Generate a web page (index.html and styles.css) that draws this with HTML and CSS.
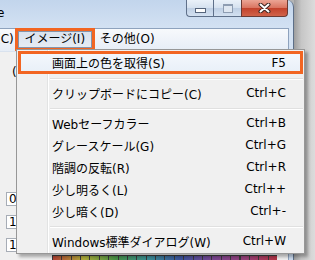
FILE: index.html
```html
<!DOCTYPE html>
<html lang="ja">
<head>
  <meta charset="UTF-8" />
  <title>イメージ メニュー</title>
  <link rel="stylesheet" href="styles.css">
</head>
<body>
  <div class="screen">
    <div class="window">
      <div class="titlebar">
        <span class="title">e</span>
        <div class="controls">
          <span class="btn min"><span class="min-glyph"></span></span>
          <span class="btn max"><span class="max-glyph"></span></span>
          <span class="btn close">
            <svg width="13" height="10" viewBox="0 0 13 10">
              <path d="M2.5 1.5 L10.5 8.5 M10.5 1.5 L2.5 8.5" stroke="#3b2420" stroke-width="4" stroke-linecap="round" fill="none"/>
              <path d="M2.5 1.5 L10.5 8.5 M10.5 1.5 L2.5 8.5" stroke="#ffffff" stroke-width="2" stroke-linecap="round" fill="none"/>
            </svg>
          </span>
        </div>
      </div>

      <div class="client">
        <!-- メニューバー -->
        <div class="menubar">
          <span class="mb-item cut">(C)</span>
          <span class="mb-item open">イメージ(I)</span>
          <span class="mb-item">その他(O)</span>
        </div>

        <!-- ウィンドウの中身（メニューの下に隠れている部分） -->
        <div class="content">
          <span class="paren">(</span>
          <div class="fields">
            <span class="field">0</span>
            <span class="field">1</span>
            <span class="field">1</span>
          </div>
          <div class="swatches"></div>
        </div>
      </div>
    </div>
    <div class="desktop"></div>

    <!-- ドロップダウンメニュー -->
    <div class="dropdown">
      <div class="mi hot"><span>画面上の色を取得(S)</span><span>F5</span></div>
      <div class="sep"></div>
      <div class="mi"><span>クリップボードにコピー(C)</span><span>Ctrl+C</span></div>
      <div class="sep"></div>
      <div class="mi"><span>Webセーフカラー</span><span>Ctrl+B</span></div>
      <div class="mi"><span>グレースケール(G)</span><span>Ctrl+G</span></div>
      <div class="mi"><span>階調の反転(R)</span><span>Ctrl+R</span></div>
      <div class="mi"><span>少し明るく(L)</span><span>Ctrl++</span></div>
      <div class="mi"><span>少し暗く(D)</span><span>Ctrl+-</span></div>
      <div class="sep"></div>
      <div class="mi"><span>Windows標準ダイアログ(W)</span><span>Ctrl+W</span></div>
    </div>
  </div>
</body>
</html>
```

FILE: styles.css
```css
body {
  margin: 0;
  font-family: "DejaVu Sans", "Noto Sans CJK JP", sans-serif;
  font-size: 12px;
  color: #000;
}
.screen {
  position: relative;
  display: flex;
  width: 315px;
  height: 260px;
  overflow: hidden;
  background: #b4b4b4;
}
.window {
  width: 294px;
  box-sizing: border-box;
  display: flex;
  flex-direction: column;
  border-right: 1px solid #5d6f88;
  border-top-right-radius: 7px;
  background: linear-gradient(#c2d5ec, #d4e2f3 30px, #cbdbef);
}
.desktop {
  flex: 1;
  background: linear-gradient(to right, #9e9e9e, #c6c6c6 35%, #dcdcdc);
}

/* タイトルバー */
.titlebar {
  height: 28px;
  flex-shrink: 0;
  display: flex;
  justify-content: space-between;
  align-items: flex-start;
}
.title {
  margin: 6px 0 0 -3px;
  line-height: 14px;
}
.controls {
  display: flex;
  margin-right: 5px;
}
.btn {
  height: 17px;
  box-sizing: border-box;
  display: flex;
  align-items: center;
  justify-content: center;
  border: 1px solid #5f708a;
  border-top: none;
  background: linear-gradient(#eaf1f9, #d5e1ef 50%, #bfcfe4 51%, #d3e1f1);
}
.min {
  width: 27px;
  border-right: none;
  border-bottom-left-radius: 4px;
}
.max {
  width: 28px;
  border-right: none;
}
.close {
  width: 47px;
  border-color: #6b3a33;
  border-bottom-right-radius: 4px;
  background: linear-gradient(#eba595, #d9735f 50%, #c2412b 51%, #d0634a);
}
.min-glyph {
  width: 9px;
  height: 3px;
  margin-top: 4px;
  border: 1px solid #56657c;
  background: #fdfdfd;
}
.max-glyph {
  width: 8px;
  height: 6px;
  border: 1px solid #8e9db2;
  border-top-width: 2px;
  background: #dfe7f1;
}

/* クライアント領域 */
.client {
  flex: 1;
  min-height: 0;
  margin-right: 4px;
  display: flex;
  flex-direction: column;
  border-top: 1px solid #8ea2bd;
  border-right: 1px solid #8ea2bd;
  background: #f0f0f0;
}
.menubar {
  height: 23px;
  box-sizing: border-box;
  flex-shrink: 0;
  display: flex;
  align-items: flex-start;
  padding-top: 2px;
  background: linear-gradient(#f7f9fc, #e6edf6);
  border-bottom: 1px solid #d9e2ee;
}
.mb-item {
  height: 17px;
  line-height: 17px;
  white-space: nowrap;
}
.cut {
  margin-left: -4px;
  padding-right: 4px;
}
.open {
  width: 74px;
  box-sizing: border-box;
  margin-right: 8px;
  line-height: 15px;
  text-align: center;
  border: 1px solid #8394ab;
  background: linear-gradient(#d9e2ee, #e6ecf4);
  outline: 3px solid #f26522;
}
.content {
  flex: 1;
  display: flex;
  flex-direction: column;
  align-items: flex-start;
  padding: 13px 0 0 6px;
}
.paren {
  margin-left: 6px;
  line-height: 14px;
}
.fields {
  margin-top: 113px;
  display: flex;
  flex-direction: column;
  gap: 9px;
}
.field {
  width: 30px;
  height: 14px;
  box-sizing: border-box;
  padding-left: 2px;
  line-height: 12px;
  border: 1px solid #a7adb6;
  background: #fff;
}
.swatches {
  margin: 3px 0 0 46px;
  width: 225px;
  height: 6px;
  border-top: 1px solid #3a3a3a;
  background:
    repeating-linear-gradient(to right, #3a3a3a 0 1px, transparent 1px 9.375px),
    linear-gradient(to right, hsl(5, 55%, 45%), hsl(60, 50%, 45%), hsl(120, 35%, 42%),
      hsl(185, 45%, 40%), hsl(225, 45%, 42%), hsl(280, 35%, 42%), hsl(320, 40%, 42%), hsl(352, 55%, 45%));
}

/* ドロップダウン */
.dropdown {
  position: absolute;
  left: 16px;
  top: 49px;
  width: 285px;
  padding: 1px;
  border: 1px solid #979797;
  background: linear-gradient(to right, #f0f0f0 30px, #e2e3e3 30px 31px, #fff 31px 32px, #f0f0f0 32px);
  box-shadow: 3px 3px 3px rgba(0, 0, 0, 0.3);
}
.mi {
  height: 22px;
  box-sizing: border-box;
  display: flex;
  justify-content: space-between;
  align-items: center;
  padding: 0 17px 0 34px;
  white-space: nowrap;
}
.mi.hot {
  height: 23px;
  padding: 0 14px 0 31px;
  border: 3px solid #f26522;
  background: linear-gradient(#f3f7fc, #e9f0f8);
}
.sep {
  margin: 4px 0 2px 32px;
  border-top: 1px solid #e0e0e0;
  border-bottom: 1px solid #fff;
}
```
